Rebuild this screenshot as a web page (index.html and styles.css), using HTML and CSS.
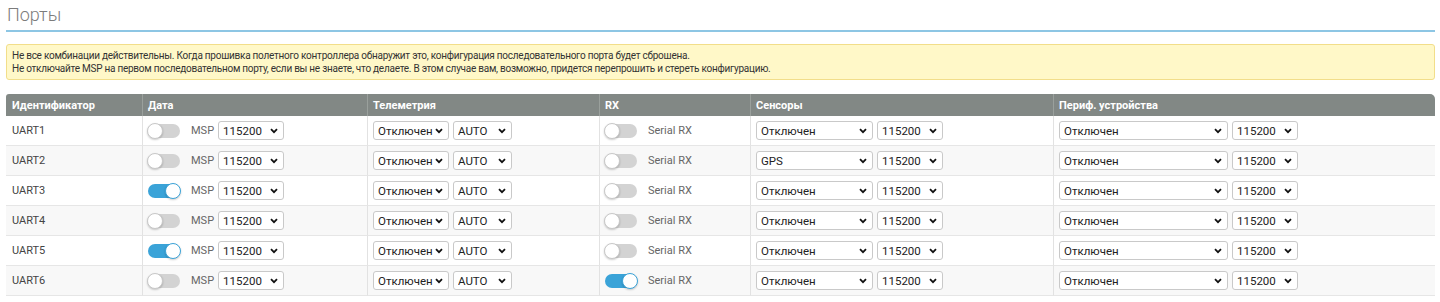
FILE: index.html
```html
<!DOCTYPE html>
<html lang="ru">
  <head>
    <meta charset="UTF-8" />
    <meta name="viewport" content="width=device-width, initial-scale=1.0" />
    <title>Порты</title>
    <link rel="stylesheet" href="styles.css">
  </head>
  <body>
    <div class="tab-ports">
      <div class="tab-title">Порты</div>

      <div class="note">
        <p>Не все комбинации действительны. Когда прошивка полетного контроллера обнаружит это, конфигурация последовательного порта будет сброшена.</p>
        <p>Не отключайте MSP на первом последовательном порту, если вы не знаете, что делаете. В этом случае вам, возможно, придется перепрошить и стереть конфигурацию.</p>
      </div>

      <table class="ports">
        <thead>
          <tr>
            <th class="c-id">Идентификатор</th>
            <th class="c-data">Дата</th>
            <th class="c-telem">Телеметрия</th>
            <th class="c-rx">RX</th>
            <th class="c-sens">Сенсоры</th>
            <th class="c-periph">Периф. устройства</th>
          </tr>
        </thead>
        <tbody id="portRows"></tbody>
      </table>
    </div>

    <script>
      // msp on, serial rx on, sensor function
      const ports = [
        { id: "UART1", msp: false, rx: false, sensor: "Отключен" },
        { id: "UART2", msp: false, rx: false, sensor: "GPS" },
        { id: "UART3", msp: true, rx: false, sensor: "Отключен" },
        { id: "UART4", msp: false, rx: false, sensor: "Отключен" },
        { id: "UART5", msp: true, rx: false, sensor: "Отключен" },
        { id: "UART6", msp: false, rx: true, sensor: "Отключен" },
      ];

      function toggle(on) {
        return `<span class="switch${on ? " on" : ""}"><span class="knob"></span></span>`;
      }

      function select(cls, value) {
        return `<select class="${cls}"><option>${value}</option></select>`;
      }

      document.getElementById("portRows").innerHTML = ports
        .map(
          (p) => `
          <tr>
            <td>${p.id}</td>
            <td><div class="cell">${toggle(p.msp)}<span class="lbl msp">MSP</span>${select("baud", "115200")}</div></td>
            <td><div class="cell">${select("telem-fn", "Отключен")}${select("telem-baud", "AUTO")}</div></td>
            <td><div class="cell">${toggle(p.rx)}<span class="lbl serial">Serial RX</span></div></td>
            <td><div class="cell">${select("sens-fn", p.sensor)}${select("baud", "115200")}</div></td>
            <td><div class="cell">${select("periph-fn", "Отключен")}${select("baud", "115200")}</div></td>
          </tr>`
        )
        .join("");
    </script>
  </body>
</html>
```

FILE: styles.css
```css
body {
  margin: 0;
  padding: 0;
  font-family: Roboto, "Open Sans", sans-serif;
  background: #fff;
  color: #444;
}
.tab-ports {
  padding: 0 5px 0 6px;
}
.tab-title {
  font-size: 18px;
  font-weight: 300;
  color: #7c7c7c;
  height: 30px;
  line-height: 30px;
  padding-left: 1px;
  border-bottom: 2px solid #8dc6e4;
}
.note {
  margin-top: 12px;
  background: #fff8c8;
  border: 1px solid #f2de8a;
  border-radius: 3px;
  padding: 4px 5px;
  height: 26px;
}
.note p {
  margin: 0;
  font-size: 10px;
  letter-spacing: -0.25px;
  line-height: 13px;
  color: #333;
}
.ports {
  margin-top: 14px;
  width: 1429px;
  table-layout: fixed;
  border-collapse: separate;
  border-spacing: 0;
}
.ports th,
.ports td {
  box-sizing: border-box;
}
.c-id { width: 136px; }
.c-data { width: 225px; }
.c-telem { width: 232px; }
.c-rx { width: 151px; }
.c-sens { width: 303px; }
.c-periph { width: 382px; }
.ports th {
  background: #828885;
  color: #fff;
  font-size: 11px;
  font-weight: 700;
  text-align: left;
  height: 22px;
  padding: 0 5px;
  border-left: 1px solid #9aa09c;
}
.ports th:first-child {
  border-left: none;
  padding-left: 6px;
  border-top-left-radius: 3px;
}
.ports th:last-child {
  border-top-right-radius: 5px;
}
.ports td {
  height: 30px;
  padding: 0 5px;
  font-size: 11px;
  border-bottom: 1px solid #e6e6e6;
  border-left: 1px solid #e2e2e2;
}
.ports td:first-child {
  border-left: none;
  padding-left: 6px;
}
.ports tbody tr:nth-child(even) td {
  background: #f8f8f8;
}
.cell {
  display: flex;
  align-items: center;
  gap: 4px;
}
.switch {
  position: relative;
  display: inline-block;
  width: 32px;
  height: 14px;
  border-radius: 8px;
  background: #d3d3d3;
  flex: none;
}
.switch .knob {
  position: absolute;
  top: -1px;
  left: -1px;
  width: 14px;
  height: 14px;
  border-radius: 50%;
  background: #fff;
  border: 1px solid #c8c8c8;
  box-shadow: 0 1px 2px rgba(0, 0, 0, 0.2);
}
.switch.on {
  background: #3aa3d8;
}
.switch.on .knob {
  left: auto;
  right: -1px;
  border-color: #3aa3d8;
}
.lbl {
  color: #666;
  font-size: 11px;
}
.lbl.msp {
  margin-left: 7px;
}
.lbl.serial {
  margin-left: 7px;
}
select {
  appearance: none;
  -webkit-appearance: none;
  height: 19px;
  padding: 0 0 0 4px;
  font-family: Roboto, sans-serif;
  font-size: 11.5px;
  color: #222;
  background: #fff url("data:image/svg+xml;utf8,<svg xmlns='http://www.w3.org/2000/svg' width='8' height='6' viewBox='0 0 8 6'><path d='M1 1.2l3 3 3-3' fill='none' stroke='%23111' stroke-width='1.8'/></svg>") no-repeat right 5px center;
  border: 1px solid #c9c9c9;
  border-radius: 3px;
  flex: none;
}
.baud { width: 66px; }
.telem-fn { width: 76px; }
.telem-baud { width: 59px; }
.sens-fn { width: 117px; }
.periph-fn { width: 169px; }
```
